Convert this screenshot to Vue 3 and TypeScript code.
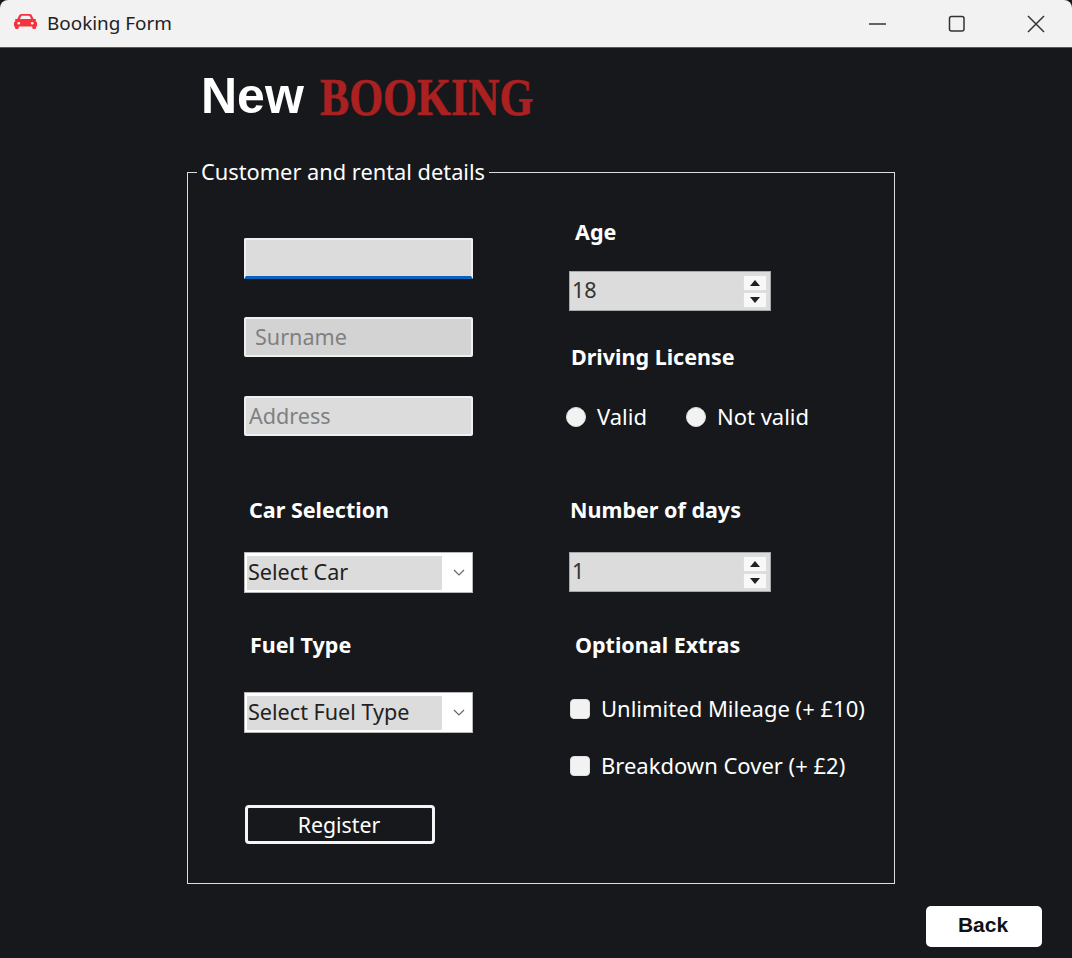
<script setup lang="ts">
import { ref } from 'vue'

const firstName = ref('')
const surname = ref('')
const address = ref('')
const age = ref(18)
const days = ref(1)
const licence = ref('')
const mileage = ref(false)
const breakdown = ref(false)

const step = (target: typeof age, by: number, min: number) => {
  target.value = Math.max(min, target.value + by)
}
</script>

<template>
  <div class="window">
    <header class="titlebar">
      <svg class="app-icon" viewBox="0 0 26 18" preserveAspectRatio="none" aria-hidden="true">
        <path fill="#f5333f" d="M6.6 1.2C7 .5 7.8 0 8.700 0h8.600c.9 0 1.700.5 2.100 1.200L21.500 6H23a1 1 0 0 1 1 1l-.6 1.400c.9.600 1.600 1.600 1.600 2.800V14a1 1 0 0 1-1 1v1.500a1.500 1.500 0 0 1-1.500 1.500h-1a1.500 1.500 0 0 1-1.500-1.500V15H6v1.500A1.500 1.500 0 0 1 4.500 18h-1A1.500 1.500 0 0 1 2 16.500V15a1 1 0 0 1-1-1v-2.800c0-1.200.7-2.200 1.600-2.800L2 7a1 1 0 0 1 1-1h1.500zM8.800 2 7.200 6h11.600l-1.600-4zM6 9.500a1.500 1.500 0 1 0 0 3 1.500 1.500 0 0 0 0-3m14 0a1.500 1.500 0 1 0 0 3 1.500 1.500 0 0 0 0-3"/>
      </svg>
      <span class="app-title">Booking Form</span>
      <div class="controls">
        <svg viewBox="0 0 18 18" aria-hidden="true"><path d="M0 9h17" /></svg>
        <svg viewBox="0 0 18 18" aria-hidden="true"><rect x="1.500" y="1.500" width="14.500" height="14.500" rx="2" /></svg>
        <svg viewBox="0 0 18 18" aria-hidden="true"><path d="M1 1l16 16M17 1 1 17" /></svg>
      </div>
    </header>

    <main class="content">
      <h1 class="heading">New <span class="brand">BOOKING</span></h1>

      <fieldset class="group">
        <legend>Customer and rental details</legend>

        <div class="columns">
          <div class="col-left">
            <input v-model="firstName" class="text-input focused" type="text" />
            <input v-model="surname" class="text-input surname" type="text" placeholder="Surname" />
            <input v-model="address" class="text-input address" type="text" placeholder="Address" />

            <div class="label car-label">Car Selection</div>
            <div class="combo combo-car">
              <span class="combo-value">Select Car</span>
              <svg viewBox="0 0 12 7" aria-hidden="true"><path d="M1 1l5 5 5-5" /></svg>
            </div>

            <div class="label fuel-label">Fuel Type</div>
            <div class="combo combo-fuel">
              <span class="combo-value">Select Fuel Type</span>
              <svg viewBox="0 0 12 7" aria-hidden="true"><path d="M1 1l5 5 5-5" /></svg>
            </div>

            <button class="register" type="button">Register</button>
          </div>

          <div class="col-right">
            <div class="label age-label">Age</div>
            <div class="spin spin-age">
              <span class="spin-value">{{ age }}</span>
              <div class="spin-buttons">
                <button type="button" @click="step(age, 1, 18)"><i class="tri up"></i></button>
                <button type="button" @click="step(age, -1, 18)"><i class="tri down"></i></button>
              </div>
            </div>

            <div class="label licence-label">Driving License</div>
            <div class="radios">
              <label class="option">
                <input v-model="licence" type="radio" value="valid" />
                <span>Valid</span>
              </label>
              <label class="option">
                <input v-model="licence" type="radio" value="invalid" />
                <span>Not valid</span>
              </label>
            </div>

            <div class="label days-label">Number of days</div>
            <div class="spin spin-days">
              <span class="spin-value">{{ days }}</span>
              <div class="spin-buttons">
                <button type="button" @click="step(days, 1, 1)"><i class="tri up"></i></button>
                <button type="button" @click="step(days, -1, 1)"><i class="tri down"></i></button>
              </div>
            </div>

            <div class="label extras-label">Optional Extras</div>
            <label class="option check first-check">
              <input v-model="mileage" type="checkbox" />
              <span>Unlimited Mileage (+ £10)</span>
            </label>
            <label class="option check second-check">
              <input v-model="breakdown" type="checkbox" />
              <span>Breakdown Cover (+ £2)</span>
            </label>
          </div>
        </div>
      </fieldset>

      <div class="footer">
        <button class="back" type="button">Back</button>
      </div>
    </main>
  </div>
</template>

<style scoped>
.window {
  width: 1072px;
  height: 958px;
  overflow: hidden;
  background: #16181b;
  font-family: "Noto Sans", "Open Sans", sans-serif;
  color: #fff;
}

.titlebar {
  display: flex;
  align-items: center;
  height: 48px;
  box-sizing: border-box;
  padding-left: 13px;
  background: #f2f2f2;
  border-bottom: 1px solid #5a5a5a;
  border-radius: 8px 8px 0 0;
}

.app-icon {
  width: 25px;
  height: 15px;
  margin-top: -4px;
}

.app-title {
  margin-left: 9px;
  margin-top: -2px;
  font-size: 18.900px;
  color: #222;
}

.controls {
  display: flex;
  gap: 61px;
  margin-left: auto;
  margin-right: 27px;
}

.controls svg {
  width: 18px;
  height: 18px;
  fill: none;
  stroke: #333;
  stroke-width: 1.500;
}

.content {
  padding-left: 187px;
}

.heading {
  margin: 0;
  padding: 23px 0 0 14px;
  height: 50px;
  line-height: 50px;
  font-family: "Liberation Sans", Arial, sans-serif;
  font-size: 50px;
  font-weight: 700;
  color: #fff;
  white-space: nowrap;
}

.brand {
  display: inline-block;
  margin-left: 2px;
  vertical-align: -2px;
  font-family: "Liberation Serif", serif;
  font-size: 52px;
  color: #ab2020;
  -webkit-text-stroke: 0.6px #ab2020;
  transform: scaleX(0.84);
  transform-origin: left center;
}

.group {
  box-sizing: border-box;
  width: 708px;
  height: 726px;
  margin: 37px 0 0;
  padding: 0;
  border: 1px solid #dcdcdc;
}

.group legend {
  margin-left: 9px;
  padding: 0 4px;
  font-size: 21.800px;
  line-height: 28px;
}

.columns {
  display: flex;
  gap: 96px;
  padding-left: 56px;
}

.col-left,
.col-right {
  display: flex;
  flex-direction: column;
  align-items: flex-start;
}

.col-left {
  width: 229px;
  padding-top: 52px;
}

.col-right {
  padding-top: 31px;
}

.label {
  height: 30px;
  line-height: 29px;
  font-size: 21.500px;
  font-weight: 700;
  white-space: nowrap;
}

.text-input {
  box-sizing: border-box;
  width: 229px;
  height: 40px;
  padding: 0 4px 2px;
  border: 2px solid #efefef;
  border-radius: 2px;
  outline: none;
  background: #dcdcdc;
  font: inherit;
  font-size: 21.600px;
  color: #222;
}

.text-input::placeholder {
  color: #808080;
  opacity: 1;
}

.focused {
  height: 41px;
  border-bottom: 3px solid #0b62b8;
  border-radius: 2px 2px 0 0;
}

.surname {
  margin-top: 38px;
  padding-left: 9px;
  background: #d3d3d3;
}

.address {
  margin-top: 39px;
  padding-left: 3px;
}

.car-label {
  margin-top: 59px;
  margin-left: 5px;
}

.fuel-label {
  margin-top: 37px;
  margin-left: 6px;
}

.combo {
  display: flex;
  align-items: center;
  box-sizing: border-box;
  width: 229px;
  height: 41px;
  padding: 2px;
  border: 1px solid #b8b8b8;
  background: #fff;
  color: #222;
}

.combo-car {
  margin-top: 27px;
}

.combo-fuel {
  margin-top: 32px;
}

.combo-value {
  box-sizing: border-box;
  width: 195px;
  height: 34px;
  padding-left: 1px;
  line-height: 32px;
  font-size: 21.600px;
  background: #dcdcdc;
  white-space: nowrap;
}

.combo svg {
  width: 12px;
  height: 7px;
  margin-left: 11px;
  fill: none;
  stroke: #666;
  stroke-width: 1.200;
}

.register {
  box-sizing: border-box;
  width: 190px;
  height: 39px;
  margin: 72px 0 0 1px;
  padding: 0 2px 0 0;
  border: 3px solid #f5f5f5;
  border-radius: 4px;
  background: #16181b;
  font: inherit;
  font-size: 21.300px;
  color: #fff;
}

.spin {
  display: flex;
  align-items: center;
  box-sizing: border-box;
  width: 202px;
  height: 40px;
  padding-left: 2px;
  border: 1px solid #a8a8a8;
  background: #dcdcdc;
  color: #333;
}

.spin-age {
  margin-top: 24px;
}

.spin-days {
  margin-top: 27px;
}

.spin-value {
  flex: 1;
  padding-bottom: 3px;
  font-size: 21.600px;
}

.spin-buttons {
  display: flex;
  flex-direction: column;
  gap: 1px;
  width: 24px;
  margin-right: 3px;
}

.spin-buttons button {
  display: flex;
  align-items: center;
  justify-content: center;
  width: 24px;
  height: 16px;
  padding: 0;
  border: 1px solid #dedede;
  background: #f8f8f8;
}

.tri {
  width: 0;
  height: 0;
  border-left: 5px solid transparent;
  border-right: 5px solid transparent;
}

.tri.up {
  border-bottom: 6px solid #222;
}

.tri.down {
  border-top: 6px solid #222;
}

.age-label {
  margin-left: 6px;
}

.licence-label {
  margin-top: 31px;
  margin-left: 2px;
}

.days-label {
  margin-top: 63px;
  margin-left: 1px;
}

.extras-label {
  margin-top: 38px;
  margin-left: 6px;
}

.radios {
  display: flex;
  gap: 39px;
  margin-top: 30px;
  margin-left: -3px;
}

.option {
  display: flex;
  align-items: center;
  gap: 11px;
  height: 30px;
  font-size: 22px;
  white-space: nowrap;
}

.option span {
  margin-top: -2px;
}

.option input {
  appearance: none;
  box-sizing: border-box;
  width: 20px;
  height: 20px;
  margin: 0;
  background: #f2f2f2;
  border: 1px solid #e0e0e0;
}

.option input[type="radio"] {
  border-radius: 50%;
}

.option input[type="checkbox"] {
  border-radius: 4px;
  margin-left: 1px;
}

.first-check {
  margin-top: 34px;
}

.second-check {
  margin-top: 27px;
}

.footer {
  display: flex;
  justify-content: flex-end;
  margin-top: 22px;
  padding-right: 30px;
}

.back {
  width: 116px;
  height: 41px;
  padding: 0 2px 3px 0;
  border: none;
  border-radius: 5px;
  background: #fff;
  font-family: "Liberation Sans", Arial, sans-serif;
  font-size: 21px;
  font-weight: 700;
  color: #111;
}
</style>

<style>
html,
body {
  margin: 0;
  background: #16181b;
}
</style>
